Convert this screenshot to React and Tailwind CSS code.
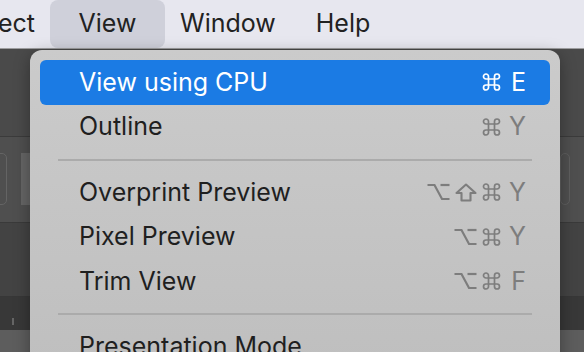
import React from "react";

const font = { fontFamily: 'Inter, "DejaVu Sans", sans-serif' };

const Cmd = () => (
  <svg width="19" height="18" viewBox="1 1 18 18" fill="none" stroke="currentColor" strokeWidth="1.7">
    <path d="M7 7V4.5A2.5 2.5 0 1 0 4.5 7H15.5A2.5 2.5 0 1 0 13 4.5V15.5A2.5 2.5 0 1 0 15.5 13H4.5A2.5 2.5 0 1 0 7 15.5Z" />
  </svg>
);

const Opt = () => (
  <svg width="23" height="18" viewBox="0 0 23 18" fill="none" stroke="currentColor" strokeWidth="2.2">
    <path d="M0.5 2H7.5L15 16H22.5" />
    <path d="M13.5 2H22.5" />
  </svg>
);

const Shift = () => (
  <svg width="22" height="19" viewBox="0 0 22 19" fill="none" stroke="currentColor" strokeWidth="2.1" strokeLinejoin="round">
    <path d="M11 1.5L20.5 10H15.5V17.5H6.5V10H1.5Z" />
  </svg>
);

const icons = { opt: Opt, shift: Shift, cmd: Cmd };

function Shortcut({ mods, k, active }) {
  return (
    <div className={`flex items-center ${active ? "text-white" : "text-[#7d7d7d]"}`}>
      <div className="flex items-center gap-[5px]">
        {mods.map((m) => {
          const Icon = icons[m];
          return <Icon key={m} />;
        })}
      </div>
      <span className="w-[25px] text-right text-[25px] leading-none">{k}</span>
    </div>
  );
}

function Row({ label, mods, k, active }) {
  return (
    <div
      className={`flex h-[44.5px] items-center justify-between rounded-[6px] pl-[39px] pr-[24px] text-[25px] ${
        active ? "bg-[#1b7be4] text-white" : "text-[#1f1f1f]"
      }`}
    >
      <span>{label}</span>
      {k && <Shortcut mods={mods} k={k} active={active} />}
    </div>
  );
}

function Sep() {
  return (
    <div className="flex h-[21px] items-center px-[18px]">
      <div className="h-[2px] w-full bg-[#ababab]" />
    </div>
  );
}

export default function App() {
  return (
    <div className="relative h-[352px] w-[584px] overflow-hidden bg-[#4b4b4b]" style={font}>
      {/* menu bar */}
      <div className="flex h-[49px] items-center border-b border-[#9d9d9f] bg-[#e7e7ef] text-[25px] text-[#222]">
        <span className="-ml-[2px] w-[52px]">ect</span>
        <div className="flex h-[48px] w-[115px] items-center justify-center rounded-[8px] bg-[#cfd0da]">View</div>
        <span className="pl-[15px]">Window</span>
        <span className="pl-[40px]">Help</span>
      </div>

      {/* app area behind */}
      <div className="flex flex-col">
        <div className="h-[88px] border-b border-[#3b3b3b] bg-[#4a4a4a]" />
        <div className="relative h-[86px] border-b border-[#3a3a3a] bg-[#4f4f4f]">
          <div className="absolute left-[-20px] top-[16px] h-[52px] w-[27px] rounded-[5px] border border-[#646464]" />
          <div className="absolute left-[21px] top-[16px] h-[52px] w-[12px] bg-[#656565]" />
          <div className="absolute left-[560px] top-[16px] h-[52px] w-[10px] rounded-[5px] border border-[#5f5f5f]" />
        </div>
        <div className="h-[74px] border-b border-[#373737] bg-[#434343]" />
        <div className="relative h-[33px] bg-[#383838]">
          <div className="absolute left-[12px] top-[21px] h-[7px] w-[2px] bg-[#666]" />
        </div>
        <div className="h-[30px] bg-[#5d5d5d]" />
      </div>

      {/* dropdown menu */}
      <div className="absolute left-[30px] top-[50px] h-[340px] w-[530px] rounded-[12px] bg-gradient-to-b from-[#cbcbcb] to-[#bebebe] px-[10px] pt-[10px] shadow-[0_4px_16px_rgba(0,0,0,0.35)]">
        <Row label="View using CPU" mods={["cmd"]} k="E" active />
        <Row label="Outline" mods={["cmd"]} k="Y" />
        <Sep />
        <Row label="Overprint Preview" mods={["opt", "shift", "cmd"]} k="Y" />
        <Row label="Pixel Preview" mods={["opt", "cmd"]} k="Y" />
        <Row label="Trim View" mods={["opt", "cmd"]} k="F" />
        <Sep />
        <Row label="Presentation Mode" />
      </div>
    </div>
  );
}
